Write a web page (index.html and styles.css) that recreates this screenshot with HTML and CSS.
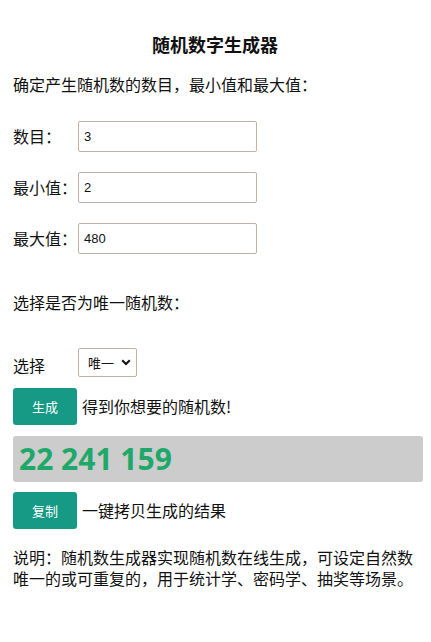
FILE: index.html
```html
<!DOCTYPE html>
<html lang="zh">
<head>
<meta charset="utf-8">
<title>随机数字生成器</title>
<link rel="stylesheet" href="styles.css">
</head>
<body>
<h1 class="title">随机数字生成器</h1>
<p class="intro">确定产生随机数的数目，最小值和最大值：</p>
<div class="row row-first">
  <label class="label">数目：</label>
  <input class="field" type="text" value="3">
</div>
<div class="row">
  <label class="label">最小值：</label>
  <input class="field" type="text" value="2">
</div>
<div class="row">
  <label class="label">最大值：</label>
  <input class="field" type="text" value="480">
</div>
<p class="question">选择是否为唯一随机数：</p>
<div class="row row-select">
  <label class="label label-low">选择</label>
  <span class="select-wrap">
    <select class="select"><option>唯一</option><option>可重复</option></select>
    <svg class="chev" width="10" height="7" viewBox="0 0 10 7"><path d="M1.2 1.3 L5 5 L8.8 1.3" fill="none" stroke="#111" stroke-width="2"/></svg>
  </span>
</div>
<div class="action">
  <button class="btn">生成</button>
  <span class="action-text">得到你想要的随机数!</span>
</div>
<div class="result">22 241 159</div>
<div class="action action-copy">
  <button class="btn">复制</button>
  <span class="action-text">一键拷贝生成的结果</span>
</div>
<p class="desc">说明：随机数生成器实现随机数在线生成，可设定自然数唯一的或可重复的，用于统计学、密码学、抽奖等场景。</p>
</body>
</html>
```
FILE: styles.css
```css
html, body {
  margin: 0;
  background: #fff;
}
body {
  padding: 0 8px 0 13px;
  font-family: "Noto Sans CJK SC", "Noto Sans", sans-serif;
  font-size: 16px;
  line-height: 21px;
  color: #111;
}
.title {
  margin: 32px 0 0;
  font-size: 18px;
  line-height: 24px;
  font-weight: bold;
  text-align: center;
  padding-right: 6px;
}
.intro {
  margin: 18px 0 0;
}
.row {
  display: flex;
  align-items: center;
  margin-top: 20px;
}
.row-first {
  margin-top: 26px;
}
.label {
  width: 65px;
  flex: none;
}
.field {
  box-sizing: border-box;
  width: 179px;
  height: 31px;
  margin: 0;
  padding: 0 5px;
  border: 1px solid #c4b1a6;
  border-radius: 2px;
  font-family: "Liberation Sans", Arial, sans-serif;
  font-size: 13px;
  color: #111;
  background: #fff;
  outline: none;
}
.question {
  margin: 38px 0 0;
}
.row-select {
  margin-top: 35px;
}
.label-low {
  position: relative;
  top: 3px;
}
.select-wrap {
  position: relative;
  display: inline-block;
}
.select {
  appearance: none;
  -webkit-appearance: none;
  box-sizing: border-box;
  width: 59px;
  height: 29px;
  margin: 0;
  padding: 0 0 0 9px;
  border: 1px solid #c4b1a6;
  border-radius: 2px;
  background: #fff;
  font-family: "Noto Sans CJK SC", sans-serif;
  font-size: 13px;
  color: #111;
  outline: none;
}
.chev {
  position: absolute;
  right: 6px;
  top: 11px;
  pointer-events: none;
}
.action {
  display: flex;
  align-items: center;
  margin-top: 11px;
}
.action-copy {
  margin-top: 10px;
}
.btn {
  width: 64px;
  height: 37px;
  margin: 0 5px 0 0;
  padding: 0;
  border: none;
  border-radius: 3px;
  background: #169a86;
  color: #fff;
  font-family: "Noto Sans CJK SC", sans-serif;
  font-size: 13px;
  flex: none;
}
.result {
  box-sizing: border-box;
  margin-top: 11px;
  height: 46px;
  padding: 0 6px;
  background: #cccccc;
  border-radius: 3px;
  font-family: "Open Sans", "Noto Sans", sans-serif;
  font-weight: bold;
  font-size: 30px;
  line-height: 46px;
  color: #1ea86a;
}
.desc {
  margin: 18px 0 0;
}
```
